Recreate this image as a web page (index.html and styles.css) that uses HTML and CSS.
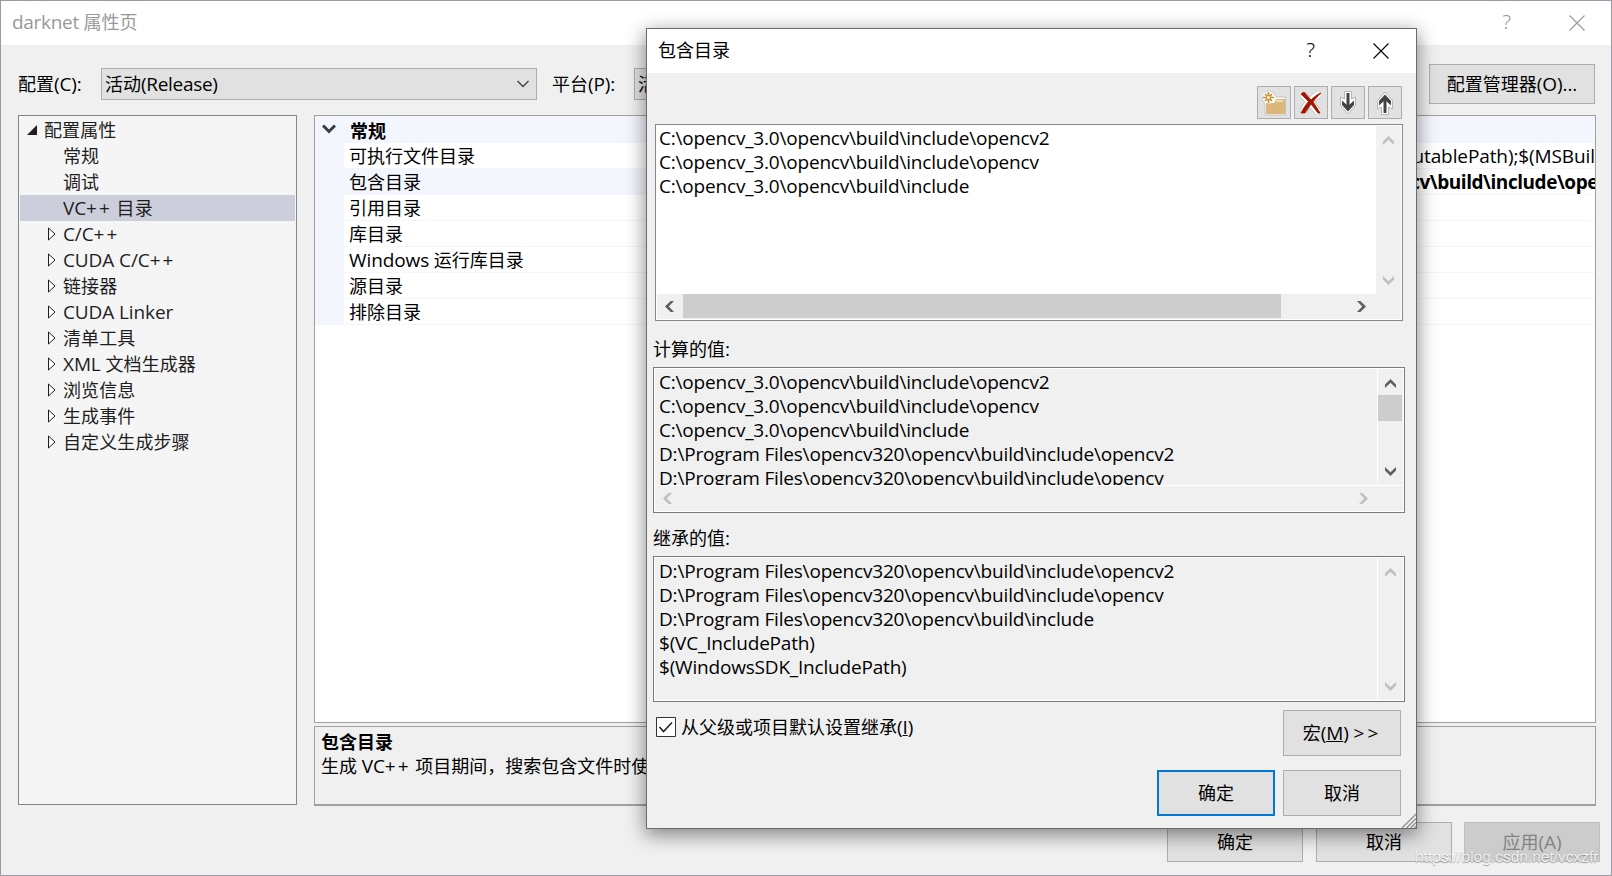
FILE: index.html
```html
<!DOCTYPE html>
<html lang="zh-CN">
<head>
  <meta charset="UTF-8" />
  <meta name="viewport" content="width=device-width, initial-scale=1.0" />
  <title>darknet 属性页</title>
  <link rel="stylesheet" href="styles.css">
</head>
<body>
  <svg class="sprite" width="0" height="0">
    <symbol id="close" viewBox="0 0 16 16"><path d="M.5 .5l15 15M15.5 .5l-15 15" fill="none" stroke="currentColor" stroke-width="1.1"/></symbol>
    <symbol id="chev-up" viewBox="0 0 12 9"><path d="M0 5.6L5.5 0 11 5.6V9L5.5 3.8 0 9z" fill="currentColor"/></symbol>
    <symbol id="chev-down" viewBox="0 0 12 9"><path d="M0 3.4L5.5 9 11 3.4V0L5.5 5.2 0 0z" fill="currentColor"/></symbol>
    <symbol id="chev-left" viewBox="0 0 9 12"><path d="M5.6 0L0 5.5 5.6 11H9L3.8 5.5 9 0z" fill="currentColor"/></symbol>
    <symbol id="chev-right" viewBox="0 0 9 12"><path d="M3.4 0L9 5.5 3.4 11H0L5.2 5.5 0 0z" fill="currentColor"/></symbol>
    <symbol id="closed" viewBox="0 0 8 14"><path d="M.5 1v12L7 7z" fill="#fff" stroke="#1e1e1e"/></symbol>
  </svg>

  <div class="window">
    <div class="titlebar inactive">
      <h1><span class="en tight">darknet</span> 属性页</h1>
      <span class="help">?</span>
      <svg class="close" width="16" height="16"><use href="#close"/></svg>
    </div>

    <div class="config">
      <label class="lbl-config">配置<span class="en">(C):</span></label>
      <div class="combo combo-config">
        <span>活动<span class="en tight">(Release)</span></span>
        <svg width="12" height="8" viewBox="0 0 12 8"><path d="M.5 1l5.5 5.5L11.500 1" fill="none" stroke="#404040" stroke-width="1.3"/></svg>
      </div>
      <label class="lbl-platform">平台<span class="en">(P):</span></label>
      <div class="combo combo-platform"><span>活动<span class="en">(x64)</span></span></div>
      <button class="btn manager">配置管理器<span class="en">(O)...</span></button>
    </div>

    <div class="content">
      <ul class="tree">
        <li class="root"><svg width="10" height="10" viewBox="0 0 10 10"><path d="M10 0v10H0z" fill="#1e1e1e"/></svg>配置属性</li>
        <li>常规</li>
        <li>调试</li>
        <li class="selected"><span class="en">VC<span class="plus">++</span></span>&nbsp;目录</li>
        <li><svg width="8" height="14"><use href="#closed"/></svg><span class="en">C/C<span class="plus">++</span></span></li>
        <li><svg width="8" height="14"><use href="#closed"/></svg><span class="en">CUDA C/C<span class="plus">++</span></span></li>
        <li><svg width="8" height="14"><use href="#closed"/></svg>链接器</li>
        <li><svg width="8" height="14"><use href="#closed"/></svg><span class="en">CUDA Linker</span></li>
        <li><svg width="8" height="14"><use href="#closed"/></svg>清单工具</li>
        <li><svg width="8" height="14"><use href="#closed"/></svg><span class="en">XML</span>&nbsp;文档生成器</li>
        <li><svg width="8" height="14"><use href="#closed"/></svg>浏览信息</li>
        <li><svg width="8" height="14"><use href="#closed"/></svg>生成事件</li>
        <li><svg width="8" height="14"><use href="#closed"/></svg>自定义生成步骤</li>
      </ul>

      <div class="side">
        <div class="grid">
          <div class="row head"><svg width="14" height="10" viewBox="0 0 14 10"><path d="M1 1.500l6 6 6-6" fill="none" stroke="#3a3c44" stroke-width="3"/></svg><b>常规</b></div>
          <div class="row"><span>可执行文件目录</span><span class="value en">ExecutablePath);$(MSBuil</span></div>
          <div class="row current"><span>包含目录</span><b class="value en">opencv\build\include\ope</b></div>
          <div class="row"><span>引用目录</span></div>
          <div class="row"><span>库目录</span></div>
          <div class="row"><span><span class="en">Windows</span> 运行库目录</span></div>
          <div class="row"><span>源目录</span></div>
          <div class="row"><span>排除目录</span></div>
        </div>
        <div class="description">
          <b>包含目录</b>
          <p>生成 <span class="en">VC<span class="plus">++</span></span> 项目期间，搜索包含文件时使用的路径。</p>
        </div>
      </div>
    </div>

    <div class="footer">
      <button class="btn">确定</button>
      <button class="btn">取消</button>
      <button class="btn disabled">应用<span class="en">(A)</span></button>
    </div>
  </div>

  <div class="dialog">
    <div class="titlebar">
      <h2>包含目录</h2>
      <span class="help">?</span>
      <svg class="close" width="16" height="16"><use href="#close"/></svg>
    </div>

    <div class="toolbar">
      <button class="tool">
        <svg width="26" height="26" viewBox="0 0 26 26">
          <path d="M4 25V14L1 9 3.500 3 8 .5 13 3l2 4h9.500v18z" fill="#fff" stroke="#c3c3c3"/>
          <path d="M5 13h8l2-4h9v15H5z" fill="#dcb67a"/>
          <path d="M15 11h7" stroke="#f3e3c5" stroke-width="1.500"/>
          <circle cx="7.500" cy="7.500" r="6" fill="#fff"/>
          <path d="M7.500 2v11M2 7.500h11M4 4l7 7M11 4l-7 7" stroke="#c98a2c" stroke-width="1.700"/>
          <circle cx="7.500" cy="7.500" r="1.500" fill="#fff"/>
        </svg>
      </button>
      <button class="tool">
        <svg width="26" height="26" viewBox="0 0 26 26">
          <path d="M5 4.500l15.500 18M21.500 3.500C15 8 8 15 5 22" fill="none" stroke="#bdbdbd" stroke-width="8"/>
          <path d="M5 4.500l15.500 18M21.500 3.500C15 8 8 15 5 22" fill="none" stroke="#fff" stroke-width="6.500"/>
          <path d="M3 4l3-2 7 8C16 7 19 4.500 23 3c-3 3-5.500 5.500-8 9 2 3 5 7 7 11h-2l-7-9c-2 3-4 6-6 9H3c2-4 4.500-8 7.500-11.500z" fill="#a31500" stroke="#a31500" stroke-width=".8"/>
        </svg>
      </button>
      <button class="tool">
        <svg width="26" height="26" viewBox="0 0 26 26">
          <path d="M9.500 1.500h7V9l4-2v8.500L13 24l-7.500-8.500V7l4 2z" fill="#fff" stroke="#b5b5b5"/>
          <path d="M13 3v15" stroke="#424242" stroke-width="3"/>
          <path d="M7 10.500L13 16l6-5.500V15l-6 6.500L7 15z" fill="#424242"/>
        </svg>
      </button>
      <button class="tool">
        <svg width="26" height="26" viewBox="0 0 26 26">
          <path d="M9.500 24.500h7V17l4 2v-8.500L13 2l-7.500 8.500V19l4-2z" fill="#fff" stroke="#b5b5b5"/>
          <path d="M13 23V8" stroke="#424242" stroke-width="3"/>
          <path d="M7 15.500L13 10l6 5.500V11l-6-6.500L7 11z" fill="#424242"/>
        </svg>
      </button>
    </div>

    <div class="list editable">
      <div class="lines">
        <p>C:\opencv_3.0\opencv\build\include\opencv2</p>
        <p>C:\opencv_3.0\opencv\build\include\opencv</p>
        <p>C:\opencv_3.0\opencv\build\include</p>
      </div>
      <div class="vbar off">
        <svg width="12" height="9"><use href="#chev-up"/></svg>
        <svg width="12" height="9"><use href="#chev-down"/></svg>
      </div>
      <div class="hbar">
        <svg width="9" height="12"><use href="#chev-left"/></svg>
        <div class="thumb"></div>
        <svg width="9" height="12"><use href="#chev-right"/></svg>
      </div>
    </div>

    <label class="caption">计算的值<span class="en">:</span></label>
    <div class="list computed">
      <div class="lines">
        <p>C:\opencv_3.0\opencv\build\include\opencv2</p>
        <p>C:\opencv_3.0\opencv\build\include\opencv</p>
        <p>C:\opencv_3.0\opencv\build\include</p>
        <p>D:\Program Files\opencv320\opencv\build\include\opencv2</p>
        <p>D:\Program Files\opencv320\opencv\build\include\opencv</p>
      </div>
      <div class="vbar">
        <svg width="12" height="9"><use href="#chev-up"/></svg>
        <div class="thumb"></div>
        <svg width="12" height="9"><use href="#chev-down"/></svg>
      </div>
      <div class="hbar off">
        <svg width="9" height="12"><use href="#chev-left"/></svg>
        <svg width="9" height="12"><use href="#chev-right"/></svg>
      </div>
    </div>

    <label class="caption">继承的值<span class="en">:</span></label>
    <div class="list inherited">
      <div class="lines">
        <p>D:\Program Files\opencv320\opencv\build\include\opencv2</p>
        <p>D:\Program Files\opencv320\opencv\build\include\opencv</p>
        <p>D:\Program Files\opencv320\opencv\build\include</p>
        <p>$(VC_IncludePath)</p>
        <p>$(WindowsSDK_IncludePath)</p>
      </div>
      <div class="vbar off">
        <svg width="12" height="9"><use href="#chev-up"/></svg>
        <svg width="12" height="9"><use href="#chev-down"/></svg>
      </div>
    </div>

    <div class="options">
      <label class="check">
        <svg width="20" height="20" viewBox="0 0 20 20"><path d="M.5.5h19v19H.5z" fill="#fff" stroke="#333"/><path d="M3.500 10l4 4.500L16 5.500" fill="none" stroke="#222" stroke-width="1.600"/></svg>
        <span>从父级或项目默认设置继承<span class="en">(<u>I</u>)</span></span>
      </label>
      <button class="btn">宏<span class="en">(<u>M</u>) <span class="gt">&gt;&gt;</span></span></button>
    </div>
    <div class="actions">
      <button class="btn primary">确定</button>
      <button class="btn">取消</button>
    </div>
    <svg class="grip" width="15" height="15" viewBox="0 0 15 15"><path d="M1 15L15 1M5.500 15L15 5.500M9.500 15L15 9.500M13 15l2-2" stroke="#8f8f8f" stroke-width="1.400"/></svg>
  </div>

  <div class="watermark">https://blog.csdn.net/vcxzfr</div>
</body>
</html>
```

FILE: styles.css
```css
* {
  box-sizing: border-box;
}
body {
  margin: 0;
  width: 1612px;
  height: 876px;
  overflow: hidden;
  position: relative;
  font-family: "Open Sans", "Noto Sans CJK SC", sans-serif;
  font-size: 18px;
  line-height: 24px;
  color: #000;
}
h1, h2, p, ul {
  margin: 0;
  padding: 0;
  font-size: 18px;
  font-weight: normal;
}
.sprite {
  position: absolute;
}
svg {
  flex-shrink: 0;
}
.en {
  font-size: 19px;
  letter-spacing: -0.1px;
  white-space: pre;
}
.plus {
  letter-spacing: 2px;
}
.tight {
  letter-spacing: -0.3px;
}
.window {
  display: flex;
  flex-direction: column;
  width: 1612px;
  height: 876px;
  background: #f0f0f0;
  border: 1px solid #9a9ba5;
  white-space: nowrap;
}
.titlebar {
  display: flex;
  align-items: center;
  height: 44px;
  padding: 0 27px 2px 11px;
  background: #fff;
}
.titlebar h1, .titlebar h2 {
  flex: 1;
}
.inactive {
  padding-right: 26px;
  color: #999;
}
.help {
  font-size: 20px;
  font-family: "Noto Sans", sans-serif;
  font-weight: 300;
  margin-right: 58px;
}
.close {
  margin-top: 1px;
}
.config {
  display: flex;
  align-items: center;
  height: 70px;
  padding: 8px 16px 0 17px;
}
.lbl-config {
  width: 83px;
}
.lbl-platform {
  width: 82px;
}
.combo {
  display: flex;
  align-items: center;
  justify-content: space-between;
  height: 32px;
  padding: 0 7px 0 3px;
  background: #e1e1e1;
  border: 1px solid #adadad;
}
.combo-config {
  width: 436px;
  margin-right: 15px;
}
.combo-platform {
  width: 436px;
}
.btn {
  display: flex;
  align-items: center;
  justify-content: center;
  padding: 0;
  background: #e1e1e1;
  border: 1px solid #adadad;
  font: inherit;
  color: #000;
}
.manager {
  width: 166px;
  height: 40px;
  margin-left: auto;
}
.content {
  display: flex;
  gap: 17px;
  height: 691px;
  padding: 0 15px 0 17px;
}
.tree {
  width: 279px;
  height: 690px;
  padding: 1px;
  background: #f5f5f5;
  border: 1px solid #828790;
  list-style: none;
  color: #1e1e1e;
}
.tree li {
  display: flex;
  align-items: center;
  height: 26px;
  padding-left: 43px;
  letter-spacing: 0.1px;
}
.tree li svg {
  margin: 0 7px 0 -15px;
}
.tree .root {
  padding-left: 7px;
}
.tree .root svg {
  margin: 0 7px 0 0;
}
.tree .selected {
  background: #cccedb;
}
.side {
  flex: 1;
  min-width: 0;
  display: flex;
  flex-direction: column;
  gap: 3px;
}
.grid {
  height: 608px;
  background: #fff;
  border: 1px solid #a0a0a0;
}
.row {
  display: flex;
  align-items: center;
  height: 26px;
  padding: 1px 0 0 5px;
  border-left: 29px solid #f3f6fc;
  border-bottom: 1px solid #f3f6fc;
  overflow: hidden;
}
.head {
  height: 27px;
  border-left: 0;
  padding: 3px 0 0 7px;
  gap: 14px;
  background: #f3f6fc;
}
.head svg {
  margin-bottom: 4px;
}
.current {
  padding-top: 0;
}
.current > span {
  flex: 1;
  margin-left: -5px;
  padding: 1px 0 1px 5px;
  background: #f3f6fc;
}
.value {
  margin-left: auto;
}
.current .value {
  margin-right: -3px;
  letter-spacing: -0.45px;
}
.description {
  height: 80px;
  padding: 3px 6px;
  border: 1px solid #a0a0a0;
  border-bottom-width: 2px;
  overflow: hidden;
}
.footer {
  display: flex;
  justify-content: flex-end;
  gap: 12px;
  padding: 16px 11px 0;
}
.footer .btn {
  width: 136px;
  height: 40px;
}
.footer .btn:first-child {
  margin-right: 1px;
}
.footer .disabled {
  background: #ccc;
  border-color: #bfbfbf;
  color: #838383;
}
.dialog {
  position: absolute;
  left: 646px;
  top: 28px;
  width: 771px;
  height: 801px;
  background: #f0f0f0;
  border: 1px solid #6b6b6b;
  box-shadow: 0 5px 18px 1px rgba(0, 0, 0, 0.45);
}
.toolbar {
  display: flex;
  justify-content: flex-end;
  gap: 3px;
  padding: 13px 14px 5px;
}
.tool {
  width: 34px;
  height: 33px;
  padding: 3px 3px;
  background: #e1e1e1;
  border: 1px solid #adadad;
}
.tool svg {
  display: block;
}
.list {
  display: grid;
  grid-template-columns: 1fr 25px;
  width: 752px;
  margin-left: 6px;
  padding: 1px;
  border: 1px solid #7a7a7a;
  background: #fff;
}
.lines {
  overflow: hidden;
  padding: 1px 0 0 4px;
  background: #f0f0f0;
}
.lines p {
  height: 24px;
  font-size: 19px;
  letter-spacing: -0.19px;
  white-space: pre;
}
.editable {
  width: 748px;
  height: 197px;
  margin-left: 8px;
  border-color: #828790;
  grid-template-rows: 168px 25px;
}
.editable .lines {
  background: #fff;
  padding: 0 0 0 2px;
}
.computed {
  height: 146px;
  grid-template-rows: 116px 25px;
  row-gap: 1px;
  padding-bottom: 0;
}
.computed .lines {
  margin-right: 1px;
}
.inherited {
  height: 146px;
  column-gap: 1px;
}
.vbar {
  display: flex;
  flex-direction: column;
  align-items: center;
  justify-content: space-between;
  padding: 10px 0 9px;
  background: #f0f0f0;
  color: #606060;
}
.vbar .thumb {
  width: 24px;
  height: 26px;
  margin: 7px 1px auto 0;
  background: #cdcdcd;
}
.hbar {
  grid-column: 1 / 3;
  display: flex;
  align-items: center;
  justify-content: space-between;
  padding: 0 35px 0 8px;
  background: #f0f0f0;
  color: #606060;
}
.hbar .thumb {
  width: 598px;
  height: 24px;
  margin: 0 auto 1px 9px;
  background: #cdcdcd;
}
.off {
  color: #bfbfbf;
}
.caption {
  display: block;
  height: 46px;
  padding: 16px 0 0 6px;
}
.computed + .caption {
  height: 43px;
  padding-top: 13px;
}
.options {
  display: flex;
  justify-content: space-between;
  padding: 8px 15px 0 9px;
}
.check {
  display: flex;
  align-items: center;
  height: 34px;
  gap: 5px;
}
.options .btn, .actions .btn {
  width: 118px;
  height: 46px;
}
.gt {
  letter-spacing: 3px;
}
.actions {
  display: flex;
  justify-content: flex-end;
  gap: 8px;
  padding: 14px 15px 0;
}
.actions .primary {
  border: 2px solid #0078d7;
}
.grip {
  position: absolute;
  right: 0;
  bottom: 0;
}
.watermark {
  position: absolute;
  left: 1415px;
  top: 845px;
  font-family: "Liberation Sans", Arial, sans-serif;
  font-size: 15.500px;
  color: rgba(255, 255, 255, 0.85);
  text-shadow: 0 1px 1px rgba(0, 0, 0, 0.35);
  white-space: nowrap;
}
```
